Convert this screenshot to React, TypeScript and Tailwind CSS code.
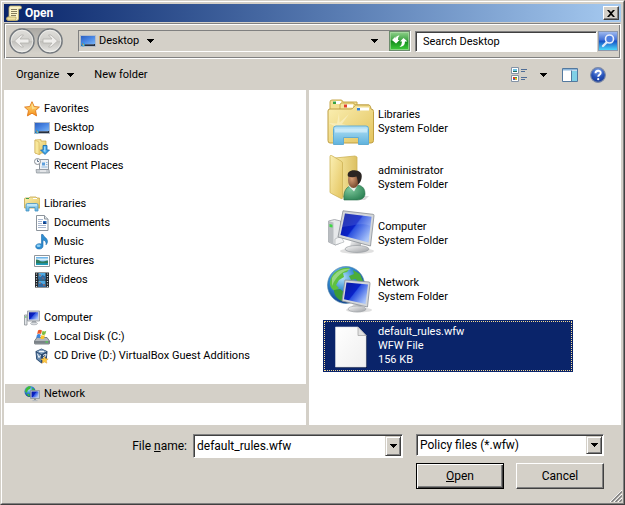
import { ReactNode, useState } from 'react';

interface PlaceItem {
  label: string;
  icon: ReactNode;
}

interface PlaceGroup extends PlaceItem {
  items: PlaceItem[];
}

interface FileItem {
  name: string;
  details: string[];
  icon: ReactNode;
}

const SUNKEN = 'border border-t-[#808080] border-l-[#808080] border-b-white border-r-white';

// shared gradients for all of the icons
const IconDefs = () => (
  <svg className="absolute h-0 w-0" aria-hidden="true">
    <defs>
      <linearGradient id="folder" x1="0" y1="0" x2="1" y2="1">
        <stop offset="0" stopColor="#fbf0b4" />
        <stop offset="1" stopColor="#e3c35c" />
      </linearGradient>
      <linearGradient id="folderSide" x1="0" y1="0" x2="1" y2="0">
        <stop offset="0" stopColor="#f9eba6" />
        <stop offset="1" stopColor="#dcc062" />
      </linearGradient>
      <linearGradient id="stand" x1="0" y1="0" x2="0" y2="1">
        <stop offset="0" stopColor="#b5e2f6" />
        <stop offset="1" stopColor="#5fb2dd" />
      </linearGradient>
      <linearGradient id="screen" x1="0" y1="0" x2="1" y2="0.7">
        <stop offset="0" stopColor="#0a1a9c" />
        <stop offset="0.5" stopColor="#0a22c8" />
        <stop offset="0.54" stopColor="#2c52e0" />
        <stop offset="1" stopColor="#a9c4fa" />
      </linearGradient>
      <linearGradient id="desktop" x1="0" y1="0" x2="1" y2="1">
        <stop offset="0" stopColor="#2c5fc0" />
        <stop offset="0.5" stopColor="#4a86e4" />
        <stop offset="1" stopColor="#79b4f4" />
      </linearGradient>
      <linearGradient id="metal" x1="0" y1="0" x2="1" y2="1">
        <stop offset="0" stopColor="#f8f8f8" />
        <stop offset="1" stopColor="#9c9fa3" />
      </linearGradient>
      <linearGradient id="paper" x1="0" y1="0" x2="1" y2="1">
        <stop offset="0" stopColor="#ffffff" />
        <stop offset="1" stopColor="#efefef" />
      </linearGradient>
      <linearGradient id="refresh" x1="0" y1="0" x2="0" y2="1">
        <stop offset="0" stopColor="#8fd08a" />
        <stop offset="0.45" stopColor="#3fa545" />
        <stop offset="0.5" stopColor="#128a1a" />
        <stop offset="1" stopColor="#3fce3c" />
      </linearGradient>
      <linearGradient id="search" x1="0" y1="0" x2="0" y2="1">
        <stop offset="0" stopColor="#9db8ee" />
        <stop offset="0.45" stopColor="#3f6fd8" />
        <stop offset="0.5" stopColor="#1450c6" />
        <stop offset="1" stopColor="#4ad8fa" />
      </linearGradient>
      <linearGradient id="navButton" x1="0" y1="0" x2="0" y2="1">
        <stop offset="0" stopColor="#e0dfdb" />
        <stop offset="0.48" stopColor="#d0cfcb" />
        <stop offset="0.52" stopColor="#c2c1bd" />
        <stop offset="1" stopColor="#ebeae7" />
      </linearGradient>
      <linearGradient id="star" x1="0" y1="0" x2="0" y2="1">
        <stop offset="0" stopColor="#ffeb8c" />
        <stop offset="1" stopColor="#f58f18" />
      </linearGradient>
      <radialGradient id="globe" cx="0.4" cy="0.3" r="0.7">
        <stop offset="0" stopColor="#b4e2fb" />
        <stop offset="0.5" stopColor="#3389cf" />
        <stop offset="1" stopColor="#0c3f8c" />
      </radialGradient>
      <radialGradient id="help" cx="0.5" cy="0.2" r="0.8">
        <stop offset="0" stopColor="#7fa4ea" />
        <stop offset="0.6" stopColor="#2450b8" />
        <stop offset="1" stopColor="#173a96" />
      </radialGradient>
      <radialGradient id="shirt" cx="0.3" cy="0.3" r="0.8">
        <stop offset="0" stopColor="#7cc79b" />
        <stop offset="1" stopColor="#2b8153" />
      </radialGradient>
      <radialGradient id="skin" cx="0.35" cy="0.4" r="0.7">
        <stop offset="0" stopColor="#d9a077" />
        <stop offset="1" stopColor="#6e4127" />
      </radialGradient>
    </defs>
  </svg>
);

const Icon = ({ size = 16, children }: { size?: number; children: ReactNode }) => (
  <svg width={size} height={size} viewBox={`0 0 ${size} ${size}`} className="shrink-0" aria-hidden="true">
    {children}
  </svg>
);

const Caret = () => (
  <svg width="7" height="4" viewBox="0 0 7 4" className="shrink-0" shapeRendering="crispEdges" aria-hidden="true">
    <path d="M0 0h7v1H0zM1 1h5v1H1zM2 2h3v1H2zM3 3h1v1H3z" fill="#000" />
  </svg>
);

const ScrollIcon = () => (
  <Icon>
    <path d="M4.500 1H14q1.500 0 1.500 1.500T14 4h-1.500v9.500q0 2-2 2H2.500q-2 0-2-1.700T2 12h1V3q0-2 1.500-2z" fill="#fbf3c8" stroke="#c2b06c" strokeWidth="0.800" />
    <path d="M2.500 12H10v1.500q0 1.700-1.500 1.700h-6Q1 15.200 1 13.600T2.500 12z" fill="#efe2a4" stroke="#b5a05a" strokeWidth="0.700" />
    <path d="M5 4.500h6M5 6.500h6M5 8.500h6M5 10.500h5" stroke="#857c5c" />
  </Icon>
);

const DesktopIcon = () => (
  <Icon>
    <path d="M0 2h16v12H0z" fill="#b4bcc8" />
    <path d="M1 3h14v8H1z" fill="url(#desktop)" />
    <path d="M1 11h14v2H1z" fill="#26303f" />
    <path d="M5 11h9v1H5z" fill="#53627a" />
    <circle cx="3" cy="11.500" r="2" fill="#2b9ae0" />
    <path d="M2 10.500h1v1H2z" fill="#f25a2c" />
    <path d="M3 11.500h1v1H3z" fill="#ffd93c" />
  </Icon>
);

const StarIcon = () => (
  <Icon>
    <path d="M8 .700l2.200 4.800 5.200.600-3.900 3.500 1.100 5.300L8 12.200l-4.600 2.700 1.100-5.300L.600 6.100l5.200-.600z" fill="url(#star)" stroke="#e0781c" strokeWidth="0.900" strokeLinejoin="round" />
    <path d="M8 2.600l1.500 3.700 3.800.400L8 8.500z" fill="#fff6c0" opacity="0.500" />
  </Icon>
);

const DownloadsIcon = () => (
  <Icon>
    <path d="M1 1l6-.500V2h5v12H7l-1 1.500-5-1.500z" fill="url(#folder)" stroke="#caa748" strokeWidth="0.700" />
    <path d="M1 1l4 2v12.500L1 14z" fill="#f8e79a" stroke="#caa748" strokeWidth="0.500" />
    <path d="M9 6.500h4V11h2.500L11 15.500 6.500 11H9z" fill="#3ea4e6" stroke="#1668ae" strokeWidth="0.800" />
    <path d="M10 7.500h1.500v6L9 11.500h1z" fill="#9ad6fa" />
  </Icon>
);

const RecentIcon = () => (
  <Icon>
    <path d="M5.500 1.500h9v10h-9z" fill="#edf1f5" stroke="#8f979f" />
    <path d="M8 4.500h3v3H8z" fill="#5c9fdc" />
    <path d="M12 4.500h1.500M12 6.500h1.500M7.500 9h6" stroke="#8db8e0" />
    <path d="M2 11.500h13l.500 3.500H2.500z" fill="#c7ccd1" stroke="#8b9299" strokeWidth="0.700" />
    <path d="M6 12.500h6v1H6z" fill="#fff" />
    <circle cx="3.500" cy="3.500" r="3" fill="#f8fafc" stroke="#8a9097" />
    <path d="M3.500 1.500v2H5" stroke="#4c6078" strokeWidth="0.900" fill="none" />
  </Icon>
);

const LibrariesIcon = () => (
  <Icon>
    <path d="M.500 3q0-1 1-1H5l1-1h6l1 1h2q1 0 1 1v9H.500z" fill="url(#folder)" stroke="#c4a346" strokeWidth="0.800" />
    <path d="M2 2.500h3" stroke="#3da24a" />
    <path d="M9 2.500h4" stroke="#fff" />
    <path d="M2 15V9q0-1.500 1.500-1.500h9Q14 7.500 14 9v6h-3v-3.500H5V15z" fill="url(#stand)" stroke="#4593c4" strokeWidth="0.800" />
    <path d="M3 9h10" stroke="#d9f2fd" />
  </Icon>
);

const DocumentsIcon = () => (
  <Icon>
    <path d="M2.500.500h8l3.500 3.500v11.500H2.500z" fill="#fff" stroke="#8c949c" />
    <path d="M10.500.500V4H14" fill="#dfe5ea" stroke="#8c949c" />
    <path d="M4 4.500h5M4 6.500h4M4 8.500h4M4 10.500h8M4 12.500h8" stroke="#a9b8d0" />
    <path d="M9 6h3.500v3H9z" fill="#2c74c8" />
    <path d="M9 8l1.500-1.500L12.500 9H9z" fill="#173f80" />
  </Icon>
);

const MusicIcon = () => (
  <Icon>
    <path d="M7.500.500h1.500c.500 2.500 4.500 3.500 4.500 6.800 0 1.500-.600 2.500-1.500 3.500.500-2.300-.500-4.300-3-4.800v6c0 1.900-1.700 3-3.800 3S1.700 14 1.700 12.400s1.600-2.700 3.500-2.700c.800 0 1.500.100 2.300.500z" fill="#2f8ed2" stroke="#1b6aa8" strokeWidth="0.600" />
    <ellipse cx="4.600" cy="11.700" rx="2" ry="1.200" fill="#8fd0f5" />
  </Icon>
);

const PicturesIcon = () => (
  <Icon>
    <path d="M.500 2.500h15v11H.500z" fill="#fff" stroke="#8f969d" />
    <path d="M2 4h12v8H2z" fill="#6fb6ea" />
    <path d="M2 5.500h12v2H2z" fill="#d8effb" />
    <path d="M2 6.500c3 0 4 2 6 2s3-.500 6-1V12H2z" fill="#2e7b5c" />
    <path d="M2 10.500c4-1 8 .500 12-.500v2H2z" fill="#1e9ab8" />
  </Icon>
);

const VideosIcon = () => (
  <Icon>
    <path d="M1 .500h14v15H1z" fill="#22262b" />
    <path d="M4.500 1h7v6.500h-7zM4.500 8.500h7V15h-7z" fill="#4fa9e2" />
    <path d="M4.500 4l2 1 2-2 3 1.500v3h-7zM4.500 12l3-1 2 1.500 2-1V15h-7z" fill="#2f6aa4" />
    <path d="M5 2l2 1-1 1.500zM8 5.500l2 .500-1 1zM5 10l2 .500-1 1.500zM9 12.500h2v1H9z" fill="#c8653c" />
    <path d="M2.500 1.500v14M13.500 1.500v14" stroke="#d8dde0" strokeWidth="1.200" strokeDasharray="1 1.500" />
  </Icon>
);

const ComputerIcon = () => (
  <Icon>
    <path d="M.500 5h2.500v10H.500z" fill="#e3e6e9" stroke="#8a9096" strokeWidth="0.800" />
    <path d="M1 7h1.500" stroke="#38b83d" />
    <path d="M3.500 1h12v10h-12z" fill="#d5d8dc" stroke="#8f959c" strokeWidth="0.800" />
    <path d="M5 2.300h9.200v7.200H5z" fill="url(#screen)" />
    <path d="M8 11h4v2H8z" fill="#9da2a8" />
    <ellipse cx="10" cy="13.500" rx="3.500" ry="1.300" fill="#d9dcdf" stroke="#9aa0a6" strokeWidth="0.600" />
  </Icon>
);

const DiskIcon = () => (
  <Icon>
    <path d="M3 8.500h10l2.500 3.500v2.500q0 .500-.500.500H1q-.500 0-.500-.500V12z" fill="#b2b6ba" stroke="#63696f" strokeWidth="0.800" />
    <path d="M1 12h14v2.500H1z" fill="#7c8389" />
    <path d="M11.500 13h2.500" stroke="#4be04e" strokeWidth="1.200" />
    <path d="M4 1.500c1.300-.900 2.600-.900 4 0L7 5c-1.300-.800-2.600-.800-3.800 0z" fill="#ee5a28" />
    <path d="M8.600 1.800c1.300.800 2.400.800 3.700 0l-1 3.500c-1.200.800-2.400.800-3.600 0z" fill="#7cbc3c" />
    <path d="M3 5.700c1.200-.800 2.500-.800 3.800 0l-1 3.500c-1.200-.800-2.500-.800-3.700 0z" fill="#3c86dc" />
    <path d="M7.400 6c1.200.800 2.500.800 3.700 0l-1 3.500c-1.200.800-2.400.800-3.700 0z" fill="#fbc52c" />
  </Icon>
);

const VirtualBoxIcon = () => (
  <Icon>
    <path d="M7.500.500l6 2.800-.700 8-5.300 4.200-5.300-4.200-.700-8z" fill="#2a4a70" />
    <path d="M7.500 1.200l5 2.300-5 2.500-5-2.500z" fill="#8fabc8" />
    <path d="M2.500 4.500L7 6.700V14L3 11z" fill="#6688ac" />
    <path d="M3.500 5.700l1.500 4 1.500-2.500M9 7.500L12 6l-.300 2.200L9 9.700M5 3.500h5" stroke="#eef3f8" fill="none" />
    <path d="M10.500 8.500l1.200 2.200 2.500.300-1.800 1.700.500 2.500-2.400-1.200-2.300 1.200.500-2.500L7 11l2.400-.300z" fill="#fdc93e" stroke="#e0a040" strokeWidth="0.500" />
  </Icon>
);

const NetworkIcon = () => (
  <Icon>
    <circle cx="6" cy="5.500" r="5.500" fill="url(#globe)" />
    <path d="M2 2.500C4 0 6 0 7 .800L6 3 4 4 2.500 7 1 5zM8 2l3 2-1 2-2-1zM3 8l2 0 1 2.500-2-.500z" fill="#3dbb35" />
    <path d="M6.500 4.500h9v8h-9z" fill="#c9cfd6" stroke="#7e8894" strokeWidth="0.700" />
    <path d="M7.500 5.500h7v6h-7z" fill="url(#screen)" />
    <path d="M10 12.500h2V14h-2z" fill="#8b9198" />
    <path d="M8.500 14h5v1.200h-5z" fill="#b5babf" />
  </Icon>
);

const LibrariesLargeIcon = () => (
  <Icon size={48}>
    <path d="M3 14V4q0-2 2-2h9q1.500 0 2 2h14v10z" fill="#f4e193" stroke="#c6a94f" />
    <path d="M6 3h8v3H6z" fill="#fff" />
    <path d="M6 3.500h3V6H6z" fill="#38a343" />
    <path d="M13 16V7q0-2 2-2h11q1.500 0 2 2h14v9z" fill="#f6e59b" stroke="#c6a94f" />
    <path d="M17 6.500h9v3h-9z" fill="#fff" />
    <path d="M17 6.500h3v3h-3z" fill="#e2402c" />
    <path d="M1 13q0-2 2-2h21q1.500 0 2.500-1.500L27.500 8q.600-1 2-1h12q1.500 0 2 1.500L44 11q2.500 0 2.500 2.500v29q0 2.500-2.500 2.500H3q-2 0-2-2.500z" fill="url(#folder)" stroke="#bf9f43" />
    <path d="M30 9.500h12v3H30z" fill="#fff" />
    <path d="M30 10h3v2.500h-3z" fill="#2f7fd6" />
    <path d="M12 15l.600 9.500L22 16l-7 10 12 3-12.500.500L17 40l-5-9-7 8 4-10-7-4 8 .500z" fill="#fffbe0" opacity="0.450" />
    <path d="M6.500 46.500V30.500q0-2.500 2.500-2.500h30q2.500 0 2.500 2.500v16h-10v-7h-15v7z" fill="url(#stand)" stroke="#62acd2" />
    <path d="M8 30.500h32v4H8z" fill="#e2f5fd" opacity="0.600" />
  </Icon>
);

const UserLargeIcon = () => (
  <Icon size={48}>
    <path d="M20 42h22l-4 4H16z" fill="#000" opacity="0.150" />
    <path d="M8 4l20-2 2 1v37l-14 3z" fill="url(#folderSide)" stroke="#cdb257" strokeWidth="0.800" />
    <path d="M3 2.500Q3 1 4.500 1.500L14 7q1.500.800 1.500 2v34.500q0 2-1.500 1L4.500 39.500Q3 39 3 38z" fill="url(#folder)" stroke="#cdb257" strokeWidth="0.800" />
    <path d="M17 46c-1-8 2-14 9-15h5c5 1 7 4 7 9 0 3-3 6-8 6z" fill="url(#shirt)" stroke="#2a7049" strokeWidth="0.600" />
    <path d="M21 31.500l6 6 4-7z" fill="#e8f2ec" />
    <ellipse cx="26.500" cy="26" rx="5.500" ry="8" fill="url(#skin)" />
    <path d="M21 22.500c-1.500-4.500 3-7 8-6 5 .500 6.500 4 5.500 8-.500 3-2 5-3.500 6 0-3-.500-5-1.500-8-3 1-5.500 1-8.500 0z" fill="#2b2522" />
  </Icon>
);

const ComputerLargeIcon = () => (
  <Icon size={48}>
    <ellipse cx="30" cy="41" rx="17" ry="3" fill="#000" opacity="0.120" />
    <path d="M1.500 11l6-1.500 6 1.500v22l-5 2-7-3z" fill="#e6e8ea" stroke="#9a9ea3" strokeWidth="0.800" />
    <path d="M1.500 11l5 1.500v22l-5-2.500z" fill="#b9bdc1" />
    <path d="M2.500 14l3 .700v2.800L2.500 17z" fill="#3ed845" />
    <path d="M8 29l6-3 3 6-9 3z" fill="#f4f5f6" stroke="#a5a9ad" strokeWidth="0.600" />
    <path d="M24 31h10v7H23z" fill="url(#metal)" />
    <ellipse cx="30" cy="39" rx="12" ry="3.500" fill="url(#metal)" stroke="#999da2" strokeWidth="0.700" />
    <path d="M16 .800l30 3.500q1 0 1 1.300L43.500 36 11 27z" fill="#d4d7da" stroke="#898e94" strokeWidth="0.800" />
    <path d="M18 3.500l26.500 3.300L41.500 32.500 13.500 25z" fill="url(#screen)" />
    <path d="M18 3.500l26.500 3.300-1.300 9C33 12 26 16 15 17z" fill="#fff" opacity="0.120" />
  </Icon>
);

const NetworkLargeIcon = () => (
  <Icon size={48}>
    <ellipse cx="32" cy="44" rx="13" ry="2.500" fill="#000" opacity="0.120" />
    <circle cx="19" cy="19" r="18.500" fill="url(#globe)" stroke="#4f84ad" strokeWidth="0.600" />
    <path d="M7 7c5-5 12-6 16-5l-3 4-4 1 1 4-5 3-3 5 3 3-4 3C3 23 0 16 7 7z" fill="#5fc13f" />
    <path d="M26 4l7 4 3 7-4 3-3-5-5 1-2-4 5-2z" fill="#4cae39" />
    <path d="M7 24l6-1 5 4-3 8c-5-2-8-6-8-11z" fill="#3c9c35" />
    <path d="M5 12C9 5 17 2 24 3 16 5 9 10 5 20z" fill="#fff" opacity="0.350" />
    <path d="M26 37h8v5h-9z" fill="url(#metal)" />
    <ellipse cx="30" cy="43" rx="9" ry="3" fill="url(#metal)" stroke="#999da2" strokeWidth="0.600" />
    <path d="M18 14l24 2q1 0 1 1.500L40.500 41 15 35z" fill="#d4d7da" stroke="#898e94" strokeWidth="0.800" />
    <path d="M19.500 16.500L41 18.500 38.500 38 17 33.200z" fill="url(#screen)" />
  </Icon>
);

const BlankFileIcon = () => (
  <Icon size={48}>
    <path d="M9 6h23l8 8v32H9z" fill="#000" opacity="0.350" />
    <path d="M8.500 5h22.500l8 8.500V45H8.500z" fill="url(#paper)" stroke="#d8dce4" strokeWidth="0.600" />
    <path d="M31 5v8.500h8z" fill="#e2e2e2" stroke="#a8a8a8" strokeWidth="0.800" />
  </Icon>
);

const places: PlaceGroup[] = [
  {
    label: 'Favorites',
    icon: <StarIcon />,
    items: [
      { label: 'Desktop', icon: <DesktopIcon /> },
      { label: 'Downloads', icon: <DownloadsIcon /> },
      { label: 'Recent Places', icon: <RecentIcon /> },
    ],
  },
  {
    label: 'Libraries',
    icon: <LibrariesIcon />,
    items: [
      { label: 'Documents', icon: <DocumentsIcon /> },
      { label: 'Music', icon: <MusicIcon /> },
      { label: 'Pictures', icon: <PicturesIcon /> },
      { label: 'Videos', icon: <VideosIcon /> },
    ],
  },
  {
    label: 'Computer',
    icon: <ComputerIcon />,
    items: [
      { label: 'Local Disk (C:)', icon: <DiskIcon /> },
      { label: 'CD Drive (D:) VirtualBox Guest Additions', icon: <VirtualBoxIcon /> },
    ],
  },
  { label: 'Network', icon: <NetworkIcon />, items: [] },
];

const files: FileItem[] = [
  { name: 'Libraries', details: ['System Folder'], icon: <LibrariesLargeIcon /> },
  { name: 'administrator', details: ['System Folder'], icon: <UserLargeIcon /> },
  { name: 'Computer', details: ['System Folder'], icon: <ComputerLargeIcon /> },
  { name: 'Network', details: ['System Folder'], icon: <NetworkLargeIcon /> },
  { name: 'default_rules.wfw', details: ['WFW File', '156 KB'], icon: <BlankFileIcon /> },
];

const NavButton = ({ label, path }: { label: string; path: string }) => (
  <button type="button" aria-label={label} className="h-[26px] w-[26px]">
    <svg width="26" height="26" viewBox="0 0 26 26" aria-hidden="true">
      <circle cx="13" cy="13" r="12" fill="url(#navButton)" stroke="#74797e" strokeWidth="1.500" />
      <circle cx="13" cy="13" r="10.800" fill="none" stroke="#f4f3f1" strokeWidth="0.700" />
      <path d={path} fill="#efeeec" stroke="#b4b3af" strokeWidth="0.800" />
    </svg>
  </button>
);

export default function App() {
  const [selectedPlace, setSelectedPlace] = useState('Network');
  const [selectedFile, setSelectedFile] = useState('default_rules.wfw');
  const [fileName, setFileName] = useState('default_rules.wfw');

  const selectFile = (name: string) => {
    setSelectedFile(name);
    setFileName(name);
  };

  return (
    <div className="min-h-screen flex flex-col border border-t-[#d4d0c8] border-l-[#d4d0c8] border-r-[#404040] border-b-[#404040] bg-[#d4d0c8] font-[Roboto,sans-serif] text-[11px] leading-[14px] text-black">
      <IconDefs />
      <div className="flex flex-1 flex-col border border-t-white border-l-white border-r-[#808080] border-b-[#808080] p-[2px]">
        <header className="flex h-[18px] items-center gap-[3px] bg-linear-to-r from-[#0a246a] to-[#a6caf0] pl-[2px] pr-[2px]">
          <ScrollIcon />
          <h1 className="flex-1 text-[12px] font-bold text-white">Open</h1>
          <button type="button" aria-label="Close" className="flex h-[14px] w-4 items-center justify-center border border-t-white border-l-white border-r-[#404040] border-b-[#404040] bg-[#d4d0c8] shadow-[inset_-1px_-1px_0_#808080]">
            <svg width="8" height="7" viewBox="0 0 8 7" aria-hidden="true">
              <path d="M0 0h2l2 2 2-2h2L5 3.500 8 7H6L4 5 2 7H0l3-3.500z" fill="#000" />
            </svg>
          </button>
        </header>

        <div className="mt-px flex h-9 items-center border border-[#808080] border-b-white border-r-white pl-1 pr-[2px] shadow-[inset_1px_1px_0_#fff,inset_-1px_-1px_0_#808080]">
          <div className="flex gap-[2px] rounded-full bg-linear-to-b from-[#aaa8a3] to-[#d6d3cc]">
            <NavButton label="Back" path="M5.500 13l6.500-6h2.500L11 11h9v4h-9l3.500 4H12z" />
            <NavButton label="Forward" path="M20.500 13L14 7h-2.500L15 11H6v4h9l-3.500 4H14z" />
          </div>
          <div className={`ml-[15px] flex h-[22px] min-w-0 flex-1 items-center pl-px ${SUNKEN}`}>
            <DesktopIcon />
            <button type="button" className="ml-[3px] flex items-center gap-2">
              Desktop
              <Caret />
            </button>
            <button type="button" aria-label="Previous locations" className="ml-auto mr-[11px]">
              <Caret />
            </button>
            <button type="button" aria-label="Refresh" className="border border-[#6c8c6c]">
              <svg width="19" height="18" viewBox="0 0 19 18" aria-hidden="true">
                <path d="M0 0h19v18H0z" fill="url(#refresh)" />
                <path d="M.500.500h18v17H.500z" fill="none" stroke="#b4e0ae" opacity="0.600" />
                <path d="M2 8l3.500-3.500v2Q6 4 8.500 3.500h1Q7.500 5 8 8h1.500L6 11.500z" fill="#fff" />
                <path d="M17.500 9.500L13.500 6 10 9.500h2Q12 13 9.500 15q5.500-.500 5.500-5.500z" fill="#fff" />
              </svg>
            </button>
          </div>
          <input type="search" aria-label="Search Desktop" placeholder="Search Desktop" className={`ml-1 h-[21px] w-[182px] bg-white px-[7px] placeholder:text-black outline-none shadow-[inset_1px_1px_0_#404040] ${SUNKEN}`} />
          <button type="button" aria-label="Search" className="ml-px border border-[#8c98ac]">
            <svg width="18" height="18" viewBox="0 0 18 18" aria-hidden="true">
              <path d="M0 0h18v18H0z" fill="url(#search)" />
              <path d="M8 10l-4 4" stroke="#dfe9f8" strokeWidth="2.400" strokeLinecap="round" />
              <circle cx="10.500" cy="7" r="4" fill="#4d7ee0" stroke="#e8effb" strokeWidth="1.600" />
            </svg>
          </button>
        </div>

        <div className="flex h-[31px] items-center pl-3 pr-[15px]">
          <button type="button" className="flex items-center gap-2">
            Organize
            <Caret />
          </button>
          <button type="button" className="ml-5">New folder</button>
          <button type="button" aria-label="Change your view" className="ml-auto flex items-center gap-[13px]">
            <Icon>
              <path d="M.500.500h7v6h-7zM.500 8.500h7v6h-7z" fill="#fff" stroke="#8493a6" />
              <path d="M2 2h4v3H2z" fill="#6cc2e4" />
              <path d="M2 4h4v1H2z" fill="#276a58" />
              <path d="M2 10h2v2H2z" fill="#d83a2c" />
              <path d="M4 10h2v1H4z" fill="#38a53c" />
              <path d="M2 12h2v1H2z" fill="#3567c8" />
              <path d="M4 11h2v2H4z" fill="#e2b62c" />
              <path d="M10 2.500h6M10 4.500h4M10 10.500h6M10 12.500h4" stroke="#4f6d96" />
            </Icon>
            <Caret />
          </button>
          <button type="button" aria-label="Show the preview pane" className="ml-[15px]">
            <Icon>
              <path d="M.500 1.500h15v13H.500z" fill="#fff" stroke="#53799f" />
              <path d="M1 2h14v1.500H1z" fill="#8db6da" />
              <path d="M10 4h5v10h-5z" fill="#7fd0e6" />
              <path d="M9.500 3.500v11" stroke="#53799f" />
            </Icon>
          </button>
          <button type="button" aria-label="Get help" className="ml-3">
            <Icon>
              <circle cx="8" cy="8" r="7.400" fill="url(#help)" stroke="#7d8aa6" strokeWidth="1.100" />
              <path d="M5.500 6.200C5.500 3 10.700 3 10.700 6c0 1.800-2.500 1.800-2.500 3.800" fill="none" stroke="#fff" strokeWidth="1.900" />
              <circle cx="8.200" cy="12.200" r="1.100" fill="#fff" />
            </Icon>
          </button>
        </div>

        <main className="flex flex-1 gap-[3px]">
          <nav className="flex w-[302px] shrink-0 flex-col gap-[19px] bg-white pt-[9px] pl-px">
            {places.map((group) => (
              <ul key={group.label}>
                {[group, ...group.items].map((item, index) => (
                  <li key={item.label}>
                    <button
                      type="button"
                      onClick={() => setSelectedPlace(item.label)}
                      className={`flex h-[19px] w-full items-center gap-1 ${index === 0 ? 'pl-[19px]' : 'pl-[29px]'} ${selectedPlace === item.label ? 'bg-[#d4d0c8]' : ''}`}
                    >
                      {item.icon}
                      {item.label}
                    </button>
                  </li>
                ))}
              </ul>
            ))}
          </nav>

          <ul className="flex min-w-0 flex-1 flex-col gap-1 bg-white px-[14px] py-[6px]">
            {files.map((file) => {
              const selected = file.name === selectedFile;
              return (
                <li key={file.name}>
                  <button
                    type="button"
                    onClick={() => selectFile(file.name)}
                    className={`flex h-[52px] w-full max-w-[250px] items-center p-px text-left ${selected ? 'bg-[#0a246a] text-white' : ''}`}
                  >
                    <span className={`flex h-full w-full items-center gap-[3px] border border-dotted pl-[2px] ${selected ? 'border-[#f5db95]' : 'border-transparent'}`}>
                      {file.icon}
                      <span className="flex flex-col">
                        <span>{file.name}</span>
                        {file.details.map((detail) => (
                          <span key={detail}>{detail}</span>
                        ))}
                      </span>
                    </span>
                  </button>
                </li>
              );
            })}
          </ul>
        </main>

        <footer className="flex items-start gap-[13px] pt-[9px] pr-[17px] pb-3 text-[12px] leading-4">
          <div className="flex flex-1 items-center justify-end gap-[6px]">
            <label htmlFor="file-name">
              File <u>n</u>ame:
            </label>
            <div className={`flex h-6 w-[210px] bg-white shadow-[inset_1px_1px_0_#404040] ${SUNKEN}`}>
              <input
                id="file-name"
                type="text"
                value={fileName}
                onChange={(e) => setFileName(e.target.value)}
                className="min-w-0 flex-1 bg-transparent pl-[3px] outline-none"
              />
              <button type="button" aria-label="Recent file names" className="m-px flex w-4 items-center justify-center border border-t-[#d4d0c8] border-l-[#d4d0c8] border-r-[#404040] border-b-[#404040] bg-[#d4d0c8] shadow-[inset_1px_1px_0_#fff,inset_-1px_-1px_0_#808080]">
                <Caret />
              </button>
            </div>
          </div>
          <div className="flex w-[188px] flex-col gap-[7px]">
            <div className="relative">
              <select aria-label="File type" className={`block h-[22px] w-full appearance-none bg-white pl-[3px] outline-none shadow-[inset_1px_1px_0_#404040] ${SUNKEN}`}>
                <option>Policy files (*.wfw)</option>
              </select>
              <span className="pointer-events-none absolute top-[2px] right-[2px] bottom-[2px] flex w-4 items-center justify-center border border-t-[#d4d0c8] border-l-[#d4d0c8] border-r-[#404040] border-b-[#404040] bg-[#d4d0c8] shadow-[inset_1px_1px_0_#fff,inset_-1px_-1px_0_#808080]">
                <Caret />
              </span>
            </div>
            <div className="flex gap-3">
              <button type="button" className="h-[26px] flex-1 border border-black shadow-[inset_1px_1px_0_#fff,inset_-1px_-1px_0_#404040,inset_-2px_-2px_0_#808080]">
                <u>O</u>pen
              </button>
              <button type="button" className="h-[26px] flex-1 border border-t-white border-l-white border-r-[#404040] border-b-[#404040] shadow-[inset_-1px_-1px_0_#808080]">
                Cancel
              </button>
            </div>
          </div>
        </footer>
        <svg width="12" height="12" viewBox="0 0 12 12" className="absolute right-[3px] bottom-[3px]" aria-hidden="true">
          <path d="M0 12L12 0M4 12l8-8M8 12l4-4" stroke="#fff" />
          <path d="M1.500 12L12 1.500M5.500 12L12 5.500M9.500 12L12 9.500" stroke="#808080" strokeWidth="1.500" />
        </svg>
      </div>
    </div>
  );
}
